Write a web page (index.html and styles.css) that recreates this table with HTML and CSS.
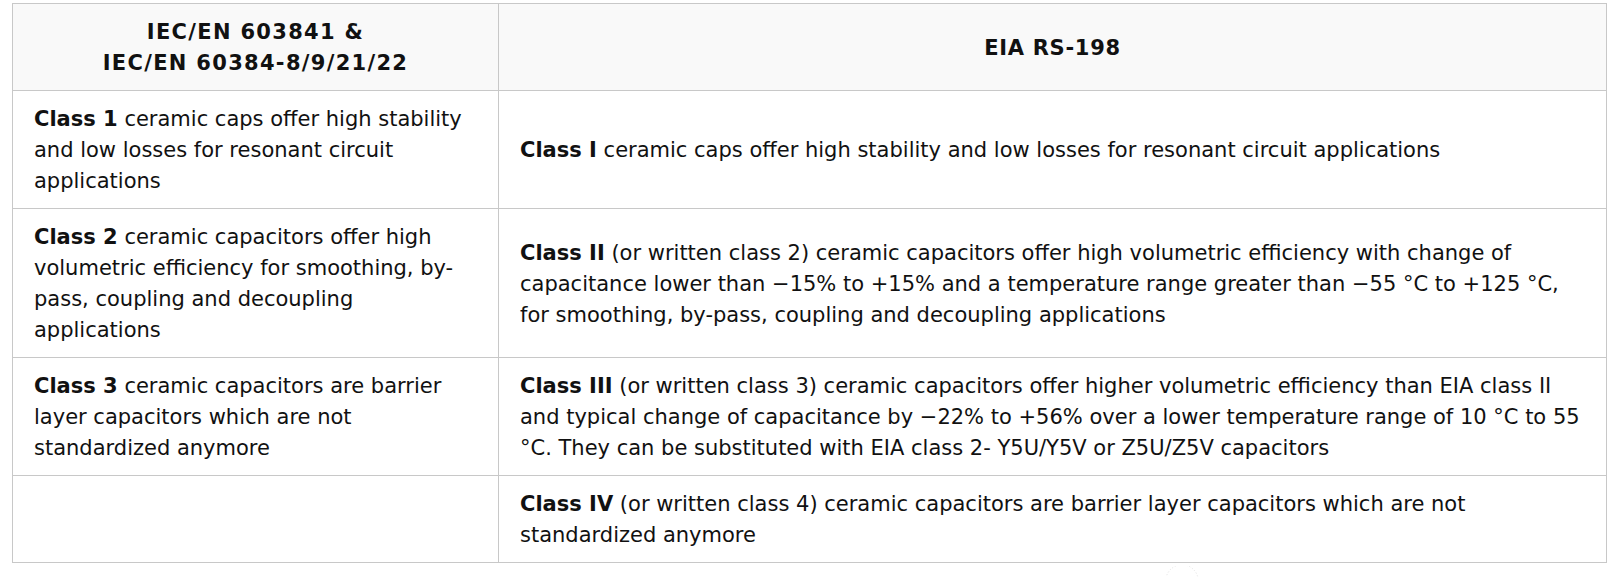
FILE: index.html
```html
<!DOCTYPE html>
<html lang="en">
<head>
<meta charset="utf-8">
<title>Ceramic capacitor classes</title>
<link rel="stylesheet" href="styles.css">
</head>
<body>
<div class="page">
<table class="classes">
  <colgroup>
    <col class="col-iec">
    <col class="col-eia">
  </colgroup>
  <thead>
    <tr>
      <th class="th-iec">IEC/EN 603841 &amp;<br>IEC/EN 60384-8/9/21/22</th>
      <th class="th-eia">EIA RS-198</th>
    </tr>
  </thead>
  <tbody>
    <tr>
      <td><b>Class 1</b> ceramic caps offer high stability and low losses for resonant circuit applications</td>
      <td><b>Class I</b> ceramic caps offer high stability and low losses for resonant circuit applications</td>
    </tr>
    <tr>
      <td><b>Class 2</b> ceramic capacitors offer high volumetric efficiency for smoothing, by-pass, coupling and decoupling applications</td>
      <td><b>Class II</b> (or written class 2) ceramic capacitors offer high volumetric efficiency with change of capacitance lower than −15% to +15% and a temperature range greater than −55&nbsp;°C to +125&nbsp;°C, for smoothing, by-pass, coupling and decoupling applications</td>
    </tr>
    <tr>
      <td><b>Class 3</b> ceramic capacitors are barrier layer capacitors which are not standardized anymore</td>
      <td><b>Class III</b> (or written class 3) ceramic capacitors offer higher volumetric efficiency than EIA class II and typical change of capacitance by −22% to +56% over a lower temperature range of 10 °C to 55 °C. They can be substituted with EIA class 2- Y5U/Y5V or Z5U/Z5V capacitors</td>
    </tr>
    <tr>
      <td></td>
      <td><b>Class IV</b> (or written class 4) ceramic capacitors are barrier layer capacitors which are not standardized anymore</td>
    </tr>
  </tbody>
</table>
<svg class="spinner" width="40" height="20" viewBox="0 0 40 20" aria-hidden="true">
  <path d="M4 18 A16 16 0 0 1 36 12" fill="none" stroke="#e2e2e2" stroke-width="1" stroke-dasharray="1 2"/>
</svg>
</div>
</body>
</html>
```

FILE: styles.css
```css
html, body {
  margin: 0;
  padding: 0;
  background: #ffffff;
}

.page {
  position: relative;
  height: 577px;
  padding: 3px 0 0 12px;
  box-sizing: border-box;
  overflow: hidden;
}

.classes {
  border-collapse: collapse;
  width: 1595px;
  font-family: "DejaVu Sans", Verdana, sans-serif;
  font-size: 21px;
  line-height: 31px;
  color: #111111;
  table-layout: fixed;
}

.col-iec {
  width: 486px;
}

.classes th,
.classes td {
  border: 1px solid #c8c8c8;
  padding: 13px 21px 11px;
  vertical-align: middle;
  text-align: left;
}

.classes th {
  background: #f9f9f9;
  text-align: center;
  font-weight: bold;
}

.th-iec {
  letter-spacing: 1.3px;
}

.th-eia {
  letter-spacing: 0.7px;
}

.classes b {
  font-weight: bold;
}

.spinner {
  position: absolute;
  left: 1162px;
  top: 566px;
}
```
